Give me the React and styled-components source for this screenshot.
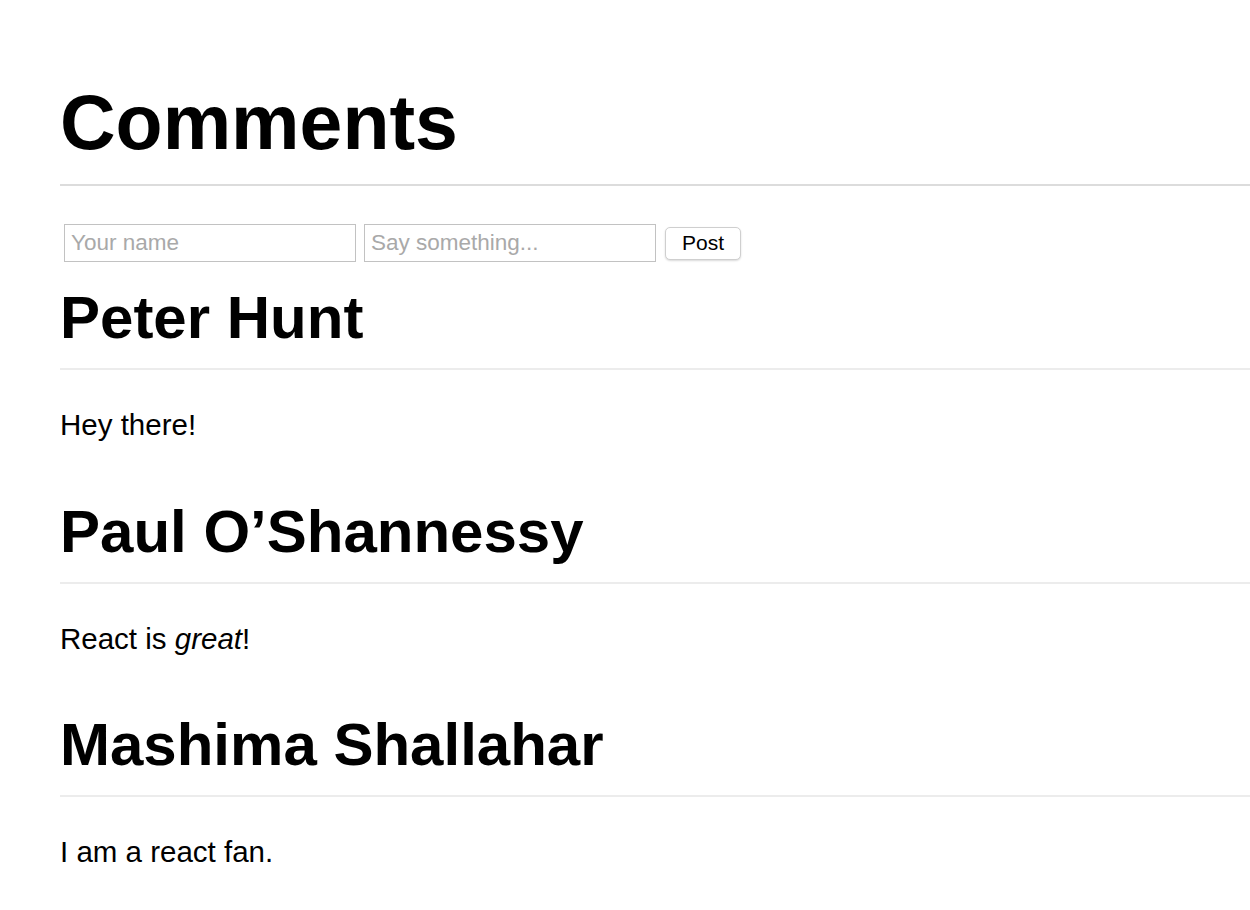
import styled, { createGlobalStyle } from "styled-components";

const GlobalStyle = createGlobalStyle`
  body {
    margin: 0;
    background: #fff;
    font-family: "Liberation Sans", Arial, Helvetica, sans-serif;
    color: #000;
  }
`;

const comments = [
  { id: 1, author: "Peter Hunt", text: <>Hey there!</> },
  { id: 2, author: "Paul O’Shannessy", text: <>React is <em>great</em>!</> },
  { id: 3, author: "Mashima Shallahar", text: <>I am a react fan.</> },
];

export default function App() {
  return (
    <>
      <GlobalStyle />
      <Page>
        <Title>Comments</Title>
        <Form onSubmit={(e) => e.preventDefault()}>
          <Field type="text" placeholder="Your name" />
          <Field type="text" placeholder="Say something..." />
          <PostButton type="submit">Post</PostButton>
        </Form>
        <List>
          {comments.map((c) => (
            <Comment key={c.id}>
              <Author>{c.author}</Author>
              <Body>{c.text}</Body>
            </Comment>
          ))}
        </List>
      </Page>
    </>
  );
}

const Page = styled.div`
  padding: 76px 0 40px 60px;
`;

const Title = styled.h1`
  margin: 0;
  font-size: 77px;
  line-height: 1.2;
  font-weight: bold;
  padding-bottom: 16px;
  border-bottom: 2px solid #dcdcdc;
`;

const Form = styled.form`
  display: flex;
  align-items: center;
  gap: 8px;
  margin: 38px 0 0 4px;
`;

const Field = styled.input`
  box-sizing: border-box;
  width: 292px;
  height: 38px;
  padding: 0 6px;
  border: 1px solid #c2c2c2;
  border-radius: 0;
  font-family: "Liberation Sans", Arial, sans-serif;
  font-size: 22.5px;
  color: #000;
  outline: none;

  &::placeholder {
    color: #a9a9a9;
  }
`;

const PostButton = styled.button`
  box-sizing: border-box;
  width: 76px;
  height: 33px;
  margin-left: 1px;
  background: #fff;
  border: 1px solid #cfcfcf;
  border-radius: 5px;
  box-shadow: 0 1px 2px rgba(0, 0, 0, 0.15);
  font-family: "Liberation Sans", Arial, sans-serif;
  font-size: 21px;
  color: #000;
  cursor: pointer;
`;

const List = styled.div`
  display: flex;
  flex-direction: column;
  margin-top: 20px;
`;

const Comment = styled.div`
  margin-bottom: 48px;
`;

const Author = styled.h2`
  margin: 0;
  font-size: 60px;
  line-height: 1.2;
  font-weight: bold;
  padding-bottom: 14px;
  border-bottom: 2px solid #ececec;
`;

const Body = styled.p`
  margin: 33px 0 0;
  font-size: 29.5px;
  line-height: 1.5;
`;
